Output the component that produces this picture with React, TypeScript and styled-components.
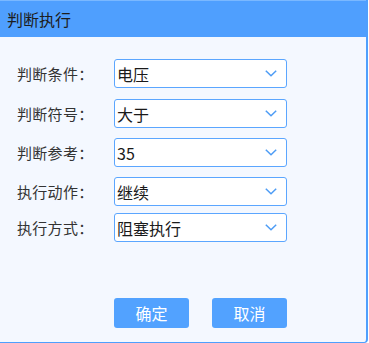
import React from "react";
import styled, { createGlobalStyle } from "styled-components";

const Global = createGlobalStyle`
  html, body { margin: 0; padding: 0; background: #ffffff; }
  body { font-family: "Noto Sans CJK SC", "Noto Sans", sans-serif; }
`;

const Dialog = styled.div`
  width: 366px;
  height: 342px;
  background: #f4f8ff;
  border-right: 2px solid #4e9ffd;
  border-bottom: 1px solid #4e9ffd;
  border-bottom-right-radius: 4px;
  display: flex;
  flex-direction: column;
  box-sizing: content-box;
`;

const Header = styled.div`
  height: 37px;
  background: #4f9ffe;
  border-top: 1px solid #7ab8ff;
  box-sizing: border-box;
  display: flex;
  align-items: center;
  padding-left: 7px;
  font-size: 16px;
  color: #1d1d1d;
`;

const Form = styled.div`
  display: flex;
  flex-direction: column;
  padding: 22px 0 0 17px;
`;

const Row = styled.div<{ $top: number }>`
  display: flex;
  align-items: center;
  margin-top: ${(p) => p.$top}px;
`;

const Label = styled.div`
  width: 97px;
  font-size: 15px;
  color: #333333;
  letter-spacing: 0.3px;
`;

const Select = styled.div`
  width: 173px;
  height: 29px;
  box-sizing: border-box;
  background: #ffffff;
  border: 1px solid #5ba6ff;
  border-radius: 3px;
  display: flex;
  align-items: center;
  justify-content: space-between;
  padding: 0 9px 0 2px;
  font-size: 16px;
  color: #1a1a1a;
`;

const Buttons = styled.div`
  margin-top: auto;
  margin-bottom: 14px;
  display: flex;
  gap: 23px;
  padding-left: 114px;
`;

const Button = styled.div`
  width: 75px;
  height: 30px;
  background: #52a2ff;
  border-radius: 3px;
  color: #ffffff;
  font-size: 16px;
  display: flex;
  align-items: center;
  justify-content: center;
`;

const Chevron = () => (
  <svg width="12" height="7" viewBox="0 0 12 7">
    <path d="M0.8 0.8 L6 5.8 L11.2 0.8" fill="none" stroke="#4d9cf5" strokeWidth="1.5" />
  </svg>
);

const rows: { label: string; value: string; top: number }[] = [
  { label: "判断条件：", value: "电压", top: 0 },
  { label: "判断符号：", value: "大于", top: 11 },
  { label: "判断参考：", value: "35", top: 10 },
  { label: "执行动作：", value: "继续", top: 10 },
  { label: "执行方式：", value: "阻塞执行", top: 7 },
];

export default function App() {
  return (
    <>
      <Global />
      <Dialog>
        <Header>判断执行</Header>
        <Form>
          {rows.map((r) => (
            <Row key={r.label} $top={r.top}>
              <Label>{r.label}</Label>
              <Select>
                <span>{r.value}</span>
                <Chevron />
              </Select>
            </Row>
          ))}
        </Form>
        <Buttons>
          <Button>确定</Button>
          <Button>取消</Button>
        </Buttons>
      </Dialog>
    </>
  );
}
